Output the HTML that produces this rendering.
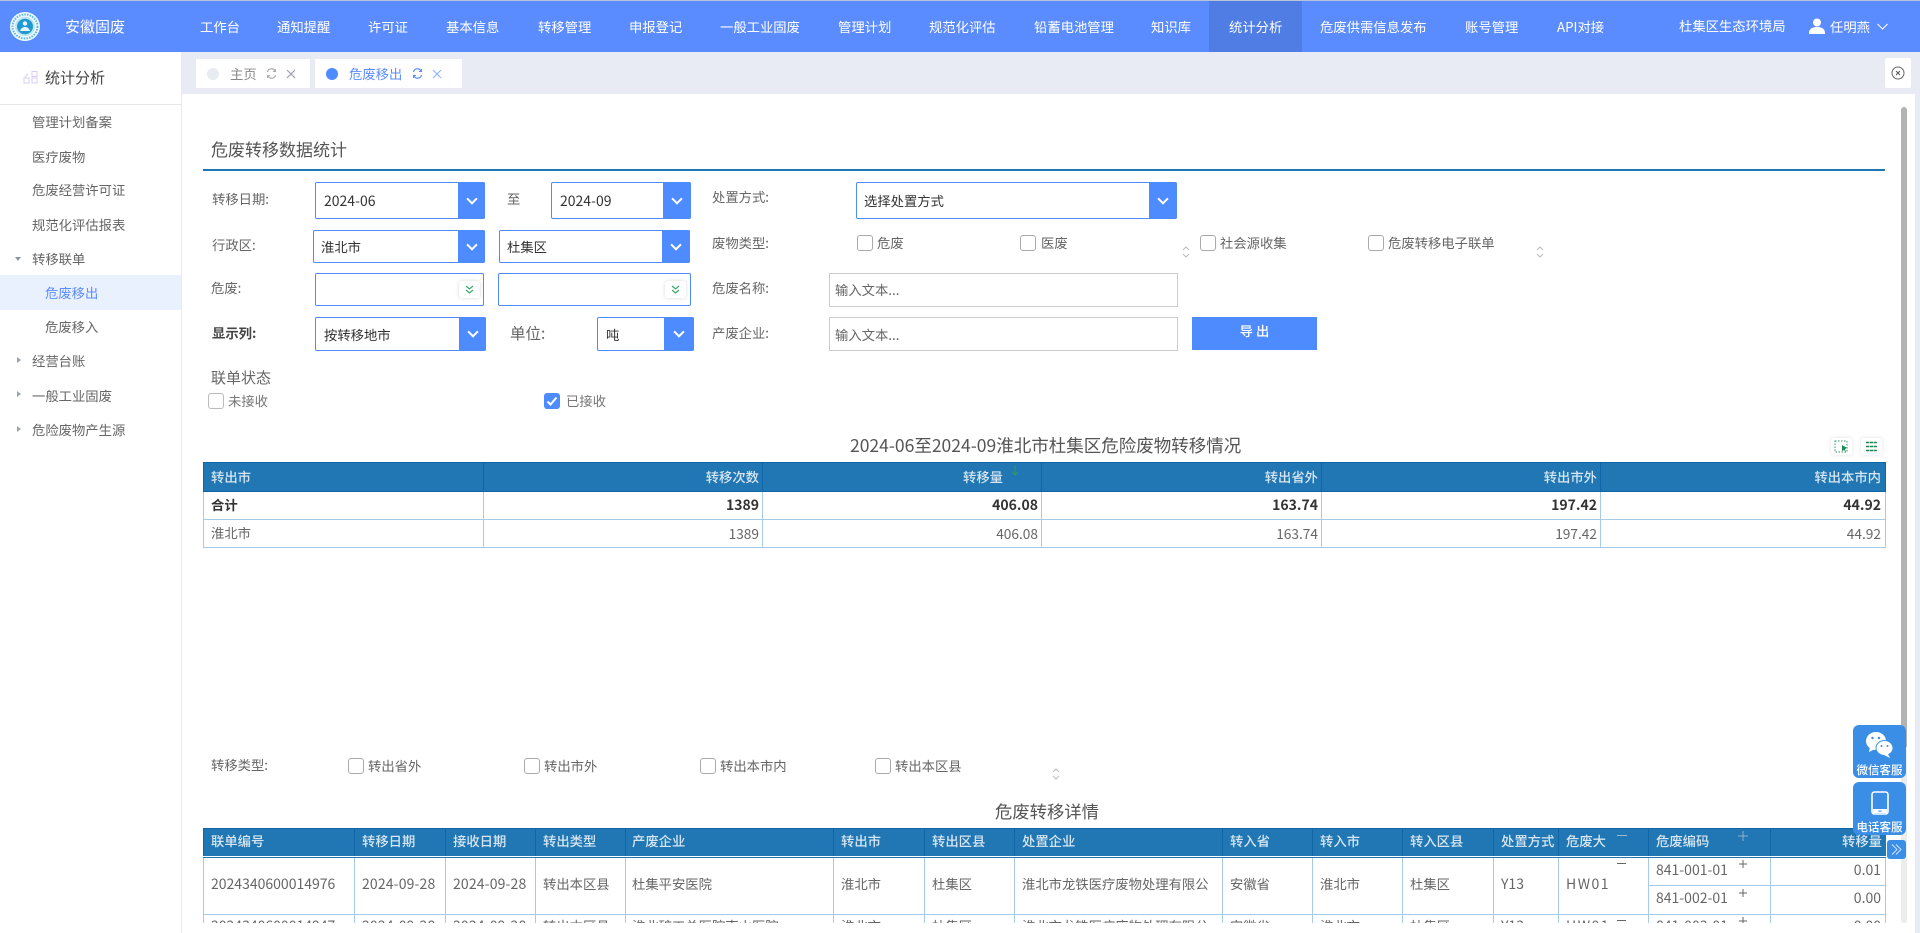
<!DOCTYPE html>
<html lang="zh-CN">
<head>
<meta charset="utf-8">
<title>危废移出</title>
<style>
html,body{margin:0;padding:0;width:1920px;height:933px;overflow:hidden;background:#fff}
body{position:relative;font-family:"Noto Sans CJK SC","Liberation Sans",sans-serif;font-size:13.33px;color:#666}
.a{position:absolute}
.t{position:absolute;white-space:nowrap;line-height:20px;height:20px}
.n{color:#fff}
.sel{position:absolute;box-sizing:border-box;border:1px solid #4d8bff;border-radius:2px;background:#fff}
.sel b{position:absolute;top:-1px;bottom:-1px;right:-1px;background:#4d8bff;border-radius:0 2px 2px 0}
.sel b:after{content:"";position:absolute;left:50%;top:50%;width:6px;height:6px;margin:-6px 0 0 -4px;border-right:2px solid #fff;border-bottom:2px solid #fff;transform:rotate(45deg)}
.v{color:#333}
.d{font-size:14px}
.dt{font-size:14px;letter-spacing:.15px}
.cb{position:absolute;box-sizing:border-box;width:16px;height:16px;border:1px solid #aaa;border-radius:3px;background:#fff}
.inp{position:absolute;box-sizing:border-box;border:1px solid #ccc;background:#fff}
.mini{position:absolute;width:21px;height:17px;background:#fff;border-radius:3px;box-shadow:0 0 4px rgba(0,0,0,.15)}
.h{position:absolute;background:#2077b4}
.hl{position:absolute;background:#0f65a5}
.bl{position:absolute;background:#a6cbe6}
.ht{position:absolute;white-space:nowrap;line-height:20px;height:20px;color:#d7e6f2;font-weight:500}
.r{text-align:right}
.s{font-weight:700;color:#333;font-size:14px}
.g{font-size:13.7px}
</style>
</head>
<body>
<!-- header -->
<div class="a" style="left:0;top:0;width:1920px;height:1px;background:#b9c4d8"></div>
<div class="a" style="left:0;top:1px;width:1920px;height:51px;background:#5b8cff"></div>
<div class="a" style="left:1209px;top:1px;width:93px;height:51px;background:#4f7de4"></div>
<svg class="a" style="left:10px;top:12px" width="30" height="29" viewBox="0 0 30 29"><ellipse cx="15" cy="14.500" rx="15" ry="14.500" fill="#eef9fc"/><ellipse cx="15" cy="14.500" rx="12.500" ry="12" fill="none" stroke="#5bb8dc" stroke-width="2" stroke-dasharray="1.500 1.200"/><ellipse cx="15" cy="14.500" rx="10" ry="9.700" fill="#bfe5f3"/><ellipse cx="15" cy="14.500" rx="8" ry="7.700" fill="#2098d2"/><circle cx="15" cy="11.500" r="2.200" fill="#e6f5fb"/><path d="M10 19c1-3 3-4 5-4s4 1 5 4z" fill="#e6f5fb"/></svg>
<div class="t n" style="left:65px;top:17px;font-size:15px">安徽固废</div>
<div class="t n" style="left:200px;top:17px">工作台</div>
<div class="t n" style="left:277px;top:17px">通知提醒</div>
<div class="t n" style="left:368px;top:17px">许可证</div>
<div class="t n" style="left:446px;top:17px">基本信息</div>
<div class="t n" style="left:538px;top:17px">转移管理</div>
<div class="t n" style="left:629px;top:17px">申报登记</div>
<div class="t n" style="left:720px;top:17px">一般工业固废</div>
<div class="t n" style="left:838px;top:17px">管理计划</div>
<div class="t n" style="left:929px;top:17px">规范化评估</div>
<div class="t n" style="left:1034px;top:17px">铅蓄电池管理</div>
<div class="t n" style="left:1151px;top:17px">知识库</div>
<div class="t n" style="left:1229px;top:17px">统计分析</div>
<div class="t n" style="left:1320px;top:17px">危废供需信息发布</div>
<div class="t n" style="left:1465px;top:17px">账号管理</div>
<div class="t n" style="left:1557px;top:17px">API对接</div>
<div class="t n" style="left:1679px;top:16px">杜集区生态环境局</div>
<svg class="a" style="left:1809px;top:18px" width="16" height="16" viewBox="0 0 16 16"><circle cx="8" cy="4.500" r="4" fill="#fff"/><path d="M0 15c0-4 3-6 8-6s8 2 8 6v1H0z" fill="#fff"/></svg>
<div class="t n" style="left:1830px;top:17px">任明燕</div>
<svg class="a" style="left:1877px;top:23px" width="11" height="7" viewBox="0 0 11 7"><path d="M.5 1l5 5 5-5" fill="none" stroke="#fff" stroke-width="1"/></svg>

<!-- tab bar -->
<div class="a" style="left:182px;top:52px;width:1738px;height:42px;background:#e8ebf3"></div>
<div class="a" style="left:1915px;top:94px;width:5px;height:839px;background:#e8ebf3"></div>
<div class="a" style="left:196px;top:59px;width:114px;height:29px;background:#fff"></div>
<div class="a" style="left:207px;top:68px;width:12px;height:12px;border-radius:50%;background:#e8ebf0"></div>
<div class="t" style="left:230px;top:64px;color:#888">主页</div>
<svg class="a" style="left:266px;top:68px" width="11" height="11" viewBox="0 0 11 11"><path d="M1.500 4A4 4 0 0 1 9 3M9.500 7A4 4 0 0 1 2 8" fill="none" stroke="#aab" stroke-width="1.200"/><path d="M9.500 1v2.500H7M1.500 10V7.500H4" fill="none" stroke="#aab"/></svg>
<svg class="a" style="left:286px;top:69px" width="10" height="10" viewBox="0 0 10 10"><path d="M1 1l8 8M9 1l-8 8" stroke="#99a" stroke-width="1.100"/></svg>
<div class="a" style="left:315px;top:59px;width:147px;height:29px;background:#fff"></div>
<div class="a" style="left:326px;top:68px;width:12px;height:12px;border-radius:50%;background:#4d8bff"></div>
<div class="t" style="left:349px;top:64px;color:#5b8cff">危废移出</div>
<svg class="a" style="left:412px;top:68px" width="11" height="11" viewBox="0 0 11 11"><path d="M1.500 4A4 4 0 0 1 9 3M9.500 7A4 4 0 0 1 2 8" fill="none" stroke="#5b8cff" stroke-width="1.200"/><path d="M9.500 1v2.500H7M1.500 10V7.500H4" fill="none" stroke="#5b8cff"/></svg>
<svg class="a" style="left:432px;top:69px" width="10" height="10" viewBox="0 0 10 10"><path d="M1 1l8 8M9 1l-8 8" stroke="#8fb0ff" stroke-width="1.100"/></svg>
<div class="a" style="left:1885px;top:58px;width:26px;height:30px;background:#fff;border-radius:2px"></div>
<svg class="a" style="left:1891px;top:66px" width="14" height="14" viewBox="0 0 14 14"><circle cx="7" cy="7" r="6" fill="none" stroke="#666"/><path d="M5 5l4 4M9 5l-4 4" stroke="#555"/></svg>

<!-- sidebar -->
<div class="a" style="left:0;top:52px;width:181px;height:881px;background:#fff;border-right:1px solid #eaeaea"></div>
<div class="a" style="left:0;top:104px;width:181px;height:1px;background:#e8e8e8"></div>
<svg class="a" style="left:23px;top:71px" width="15" height="13" viewBox="0 0 15 13"><path d="M9 .5h5v5H9zM1 7h5v5H1zM9 7h5v5H9zM2 6l3-3" fill="none" stroke="#d8ccf5" stroke-width="1"/></svg>
<div class="t" style="left:45px;top:68px;font-size:15px;color:#444">统计分析</div>
<div class="t" style="left:32px;top:112px">管理计划备案</div>
<div class="t" style="left:32px;top:147px">医疗废物</div>
<div class="t" style="left:32px;top:180px">危废经营许可证</div>
<div class="t" style="left:32px;top:215px">规范化评估报表</div>
<div class="a" style="left:15px;top:257px;border-left:3.500px solid transparent;border-right:3.500px solid transparent;border-top:4px solid #8a97a8"></div>
<div class="t" style="left:32px;top:249px">转移联单</div>
<div class="a" style="left:0;top:275px;width:181px;height:35px;background:#e9f0fe"></div>
<div class="t" style="left:45px;top:283px;color:#5b8cff">危废移出</div>
<div class="t" style="left:45px;top:317px">危废移入</div>
<div class="a" style="left:17px;top:357px;border-top:3.500px solid transparent;border-bottom:3.500px solid transparent;border-left:4px solid #9aa5b2"></div>
<div class="t" style="left:32px;top:351px">经营台账</div>
<div class="a" style="left:17px;top:391px;border-top:3.500px solid transparent;border-bottom:3.500px solid transparent;border-left:4px solid #9aa5b2"></div>
<div class="t" style="left:32px;top:386px">一般工业固废</div>
<div class="a" style="left:17px;top:426px;border-top:3.500px solid transparent;border-bottom:3.500px solid transparent;border-left:4px solid #9aa5b2"></div>
<div class="t" style="left:32px;top:420px">危险废物产生源</div>

<!-- title -->
<div class="t" style="left:211px;top:139px;font-size:17px;color:#555">危废转移数据统计</div>
<div class="a" style="left:203px;top:169px;width:1682px;height:2px;background:#1f77b4"></div>

<!-- form row 1 -->
<div class="t" style="left:212px;top:189px">转移日期:</div>
<div class="sel" style="left:315px;top:182px;width:170px;height:37px"><b style="width:27px"></b></div>
<div class="t v d" style="left:324px;top:191px">2024-06</div>
<div class="t" style="left:507px;top:189px">至</div>
<div class="sel" style="left:551px;top:182px;width:140px;height:37px"><b style="width:28px"></b></div>
<div class="t v d" style="left:560px;top:191px">2024-09</div>
<div class="t" style="left:712px;top:187px">处置方式:</div>
<div class="sel" style="left:856px;top:182px;width:321px;height:37px"><b style="width:28px"></b></div>
<div class="t v" style="left:864px;top:191px">选择处置方式</div>

<!-- form row 2 -->
<div class="t" style="left:212px;top:235px">行政区:</div>
<div class="sel" style="left:313px;top:230px;width:172px;height:33px"><b style="width:27px"></b></div>
<div class="t v" style="left:321px;top:237px">淮北市</div>
<div class="sel" style="left:499px;top:230px;width:191px;height:33px"><b style="width:28px"></b></div>
<div class="t v" style="left:507px;top:237px">杜集区</div>
<div class="t" style="left:712px;top:233px">废物类型:</div>
<div class="cb" style="left:857px;top:235px"></div><div class="t" style="left:877px;top:233px">危废</div>
<div class="cb" style="left:1020px;top:235px"></div><div class="t" style="left:1041px;top:233px">医废</div>
<svg class="a" style="left:1181px;top:246px" width="10" height="12" viewBox="0 0 10 12"><path d="M2 4l3-3 3 3M2 8l3 3 3-3" fill="none" stroke="#bbb"/></svg>
<div class="cb" style="left:1200px;top:235px"></div><div class="t" style="left:1220px;top:233px">社会源收集</div>
<div class="cb" style="left:1368px;top:235px"></div><div class="t" style="left:1388px;top:233px">危废转移电子联单</div>
<svg class="a" style="left:1535px;top:246px" width="10" height="12" viewBox="0 0 10 12"><path d="M2 4l3-3 3 3M2 8l3 3 3-3" fill="none" stroke="#bbb"/></svg>

<!-- form row 3 -->
<div class="t" style="left:211px;top:278px">危废:</div>
<div class="sel" style="left:315px;top:273px;width:169px;height:33px"></div>
<div class="mini" style="left:459px;top:281px"></div>
<svg class="a" style="left:465px;top:285px" width="9" height="10" viewBox="0 0 9 10"><path d="M1 1l3.500 3 3.500-3M1 5l3.500 3 3.500-3" fill="none" stroke="#3aa76d" stroke-width="1.200"/></svg>
<div class="sel" style="left:498px;top:273px;width:193px;height:33px"></div>
<div class="mini" style="left:665px;top:281px"></div>
<svg class="a" style="left:671px;top:285px" width="9" height="10" viewBox="0 0 9 10"><path d="M1 1l3.500 3 3.500-3M1 5l3.500 3 3.500-3" fill="none" stroke="#3aa76d" stroke-width="1.200"/></svg>
<div class="t" style="left:712px;top:278px">危废名称:</div>
<div class="inp" style="left:829px;top:273px;width:349px;height:34px"></div>
<div class="t" style="left:835px;top:280px">输入文本...</div>

<!-- form row 4 -->
<div class="t" style="left:212px;top:323px;font-weight:700;color:#444">显示列:</div>
<div class="sel" style="left:315px;top:317px;width:171px;height:34px"><b style="width:27px"></b></div>
<div class="t v" style="left:324px;top:325px">按转移地市</div>
<div class="t" style="left:510px;top:323px;font-size:15.500px">单位:</div>
<div class="sel" style="left:597px;top:317px;width:97px;height:34px"><b style="width:30px"></b></div>
<div class="t v" style="left:606px;top:325px">吨</div>
<div class="t" style="left:712px;top:323px">产废企业:</div>
<div class="inp" style="left:829px;top:317px;width:349px;height:34px"></div>
<div class="t" style="left:835px;top:325px">输入文本...</div>
<div class="a" style="left:1192px;top:317px;width:125px;height:33px;background:#4d8bff;color:#fff;text-align:center;line-height:27px;font-weight:500">导 出</div>

<!-- status -->
<div class="t" style="left:211px;top:368px;font-size:15px">联单状态</div>
<div class="cb" style="left:208px;top:393px;border-color:#bbb"></div>
<div class="t" style="left:228px;top:391px;color:#777">未接收</div>
<div class="a" style="left:544px;top:393px;width:16px;height:16px;border-radius:3px;background:#4d8bff"></div>
<svg class="a" style="left:544px;top:393px" width="16" height="16" viewBox="0 0 16 16"><path d="M3.500 8.500l3 3 6-7" fill="none" stroke="#fff" stroke-width="2"/></svg>
<div class="t" style="left:566px;top:391px;color:#777">已接收</div>

<!-- chart title -->
<div class="t" style="left:850px;top:436px;font-size:17.500px;color:#555">2024-06至2024-09淮北市杜集区危险废物转移情况</div>
<div class="a" style="left:1831px;top:438px;width:21px;height:17px;background:#fff;border-radius:3px;box-shadow:0 0 4px rgba(0,0,0,.12)"></div>
<svg class="a" style="left:1834px;top:440px" width="15" height="13" viewBox="0 0 15 13"><rect x="1" y="1" width="12" height="11" fill="none" stroke="#2e9a62" stroke-dasharray="1.500 1.500"/><path d="M8 5l5 3-2 1 1 3-2-2-2 1z" fill="#1d8a54"/></svg>
<div class="a" style="left:1861px;top:438px;width:21px;height:17px;background:#fff;border-radius:3px;box-shadow:0 0 4px rgba(0,0,0,.12)"></div>
<svg class="a" style="left:1865px;top:441px" width="13" height="11" viewBox="0 0 13 11"><path d="M1 1.500h11M1 5.500h11M1 9.500h11" stroke="#1d8a54" stroke-width="1.500" stroke-dasharray="3.300 .5"/></svg>

<!-- table 1 -->
<div class="h" style="left:203px;top:462px;width:1683px;height:30px"></div>
<div class="hl" style="left:203px;top:462px;width:1683px;height:1px"></div>
<div class="hl" style="left:203px;top:491px;width:1683px;height:1px"></div>
<div class="hl" style="left:203px;top:462px;width:1px;height:30px"></div>
<div class="hl" style="left:483px;top:462px;width:1px;height:30px"></div>
<div class="hl" style="left:762px;top:462px;width:1px;height:30px"></div>
<div class="hl" style="left:1041px;top:462px;width:1px;height:30px"></div>
<div class="hl" style="left:1321px;top:462px;width:1px;height:30px"></div>
<div class="hl" style="left:1600px;top:462px;width:1px;height:30px"></div>
<div class="hl" style="left:1885px;top:462px;width:1px;height:30px"></div>
<div class="bl" style="left:203px;top:492px;width:1px;height:56px"></div>
<div class="bl" style="left:483px;top:492px;width:1px;height:56px"></div>
<div class="bl" style="left:762px;top:492px;width:1px;height:56px"></div>
<div class="bl" style="left:1041px;top:492px;width:1px;height:56px"></div>
<div class="bl" style="left:1321px;top:492px;width:1px;height:56px"></div>
<div class="bl" style="left:1600px;top:492px;width:1px;height:56px"></div>
<div class="bl" style="left:1885px;top:492px;width:1px;height:56px"></div>
<div class="bl" style="left:203px;top:519px;width:1683px;height:1px"></div>
<div class="bl" style="left:203px;top:547px;width:1683px;height:1px"></div>
<div class="ht" style="left:211px;top:467px">转出市</div>
<div class="ht r" style="left:600px;width:159px;top:467px">转移次数</div>
<div class="ht r" style="left:845px;width:158px;top:467px">转移量</div>
<svg class="a" style="left:1011px;top:465px" width="8" height="11" viewBox="0 0 8 11"><path d="M4 0v10M1 7l3 3 3-3" fill="none" stroke="#2e9a62"/></svg>
<div class="ht r" style="left:1160px;width:158px;top:467px">转出省外</div>
<div class="ht r" style="left:1440px;width:157px;top:467px">转出市外</div>
<div class="ht r" style="left:1720px;width:161px;top:467px">转出本市内</div>
<div class="t" style="left:211px;top:495px;font-weight:700;color:#333">合计</div>
<div class="t r s" style="left:600px;width:159px;top:495px">1389</div>
<div class="t r s" style="left:880px;width:158px;top:495px">406.08</div>
<div class="t r s" style="left:1160px;width:158px;top:495px">163.74</div>
<div class="t r s" style="left:1440px;width:157px;top:495px">197.42</div>
<div class="t r s" style="left:1720px;width:161px;top:495px">44.92</div>
<div class="t" style="left:211px;top:523px">淮北市</div>
<div class="t r g" style="left:600px;width:159px;top:523px">1389</div>
<div class="t r g" style="left:880px;width:158px;top:523px">406.08</div>
<div class="t r g" style="left:1160px;width:158px;top:523px">163.74</div>
<div class="t r g" style="left:1440px;width:157px;top:523px">197.42</div>
<div class="t r g" style="left:1720px;width:161px;top:523px">44.92</div>

<!-- transfer type -->
<div class="t" style="left:211px;top:755px">转移类型:</div>
<div class="cb" style="left:348px;top:758px"></div><div class="t" style="left:368px;top:756px">转出省外</div>
<div class="cb" style="left:524px;top:758px"></div><div class="t" style="left:544px;top:756px">转出市外</div>
<div class="cb" style="left:700px;top:758px"></div><div class="t" style="left:720px;top:756px">转出本市内</div>
<div class="cb" style="left:875px;top:758px"></div><div class="t" style="left:895px;top:756px">转出本区县</div>
<svg class="a" style="left:1051px;top:768px" width="10" height="12" viewBox="0 0 10 12"><path d="M2 4l3-3 3 3M2 8l3 3 3-3" fill="none" stroke="#bbb"/></svg>
<div class="t" style="left:995px;top:801px;font-size:17.330px;color:#555">危废转移详情</div>

<!-- table 2 -->
<div class="a" style="left:0;top:0;width:1920px;height:923px;overflow:hidden">
<div class="h" style="left:203px;top:828px;width:1683px;height:28px"></div>
<div class="hl" style="left:203px;top:828px;width:1683px;height:1px"></div>
<div class="bl" style="left:203px;top:857px;width:1683px;height:1px;background:#1f77b4"></div>
<div class="hl" style="left:203px;top:828px;width:1px;height:28px"></div>
<div class="hl" style="left:354px;top:828px;width:1px;height:28px"></div>
<div class="hl" style="left:445px;top:828px;width:1px;height:28px"></div>
<div class="hl" style="left:535px;top:828px;width:1px;height:28px"></div>
<div class="hl" style="left:625px;top:828px;width:1px;height:28px"></div>
<div class="hl" style="left:833px;top:828px;width:1px;height:28px"></div>
<div class="hl" style="left:924px;top:828px;width:1px;height:28px"></div>
<div class="hl" style="left:1014px;top:828px;width:1px;height:28px"></div>
<div class="hl" style="left:1222px;top:828px;width:1px;height:28px"></div>
<div class="hl" style="left:1312px;top:828px;width:1px;height:28px"></div>
<div class="hl" style="left:1402px;top:828px;width:1px;height:28px"></div>
<div class="hl" style="left:1493px;top:828px;width:1px;height:28px"></div>
<div class="hl" style="left:1558px;top:828px;width:1px;height:28px"></div>
<div class="hl" style="left:1648px;top:828px;width:1px;height:28px"></div>
<div class="hl" style="left:1770px;top:828px;width:1px;height:28px"></div>
<div class="bl" style="left:203px;top:858px;width:1px;height:69px"></div>
<div class="bl" style="left:354px;top:858px;width:1px;height:69px"></div>
<div class="bl" style="left:445px;top:858px;width:1px;height:69px"></div>
<div class="bl" style="left:535px;top:858px;width:1px;height:69px"></div>
<div class="bl" style="left:625px;top:858px;width:1px;height:69px"></div>
<div class="bl" style="left:833px;top:858px;width:1px;height:69px"></div>
<div class="bl" style="left:924px;top:858px;width:1px;height:69px"></div>
<div class="bl" style="left:1014px;top:858px;width:1px;height:69px"></div>
<div class="bl" style="left:1222px;top:858px;width:1px;height:69px"></div>
<div class="bl" style="left:1312px;top:858px;width:1px;height:69px"></div>
<div class="bl" style="left:1402px;top:858px;width:1px;height:69px"></div>
<div class="bl" style="left:1493px;top:858px;width:1px;height:69px"></div>
<div class="bl" style="left:1558px;top:858px;width:1px;height:69px"></div>
<div class="bl" style="left:1648px;top:858px;width:1px;height:69px"></div>
<div class="bl" style="left:1770px;top:858px;width:1px;height:69px"></div>
<div class="bl" style="left:1885px;top:858px;width:1px;height:69px"></div>
<div class="bl" style="left:203px;top:914px;width:1683px;height:1px"></div>
<div class="bl" style="left:1648px;top:885px;width:238px;height:1px"></div>
<div class="ht" style="left:211px;top:831px">联单编号</div>
<div class="ht" style="left:362px;top:831px">转移日期</div>
<div class="ht" style="left:453px;top:831px">接收日期</div>
<div class="ht" style="left:543px;top:831px">转出类型</div>
<div class="ht" style="left:632px;top:831px">产废企业</div>
<div class="ht" style="left:841px;top:831px">转出市</div>
<div class="ht" style="left:932px;top:831px">转出区县</div>
<div class="ht" style="left:1022px;top:831px">处置企业</div>
<div class="ht" style="left:1230px;top:831px">转入省</div>
<div class="ht" style="left:1320px;top:831px">转入市</div>
<div class="ht" style="left:1410px;top:831px">转入区县</div>
<div class="ht" style="left:1501px;top:831px">处置方式</div>
<div class="ht" style="left:1566px;top:831px">危废大</div>
<div class="ht" style="left:1656px;top:831px">危废编码</div>
<div class="ht r" style="left:1780px;width:102px;top:831px">转移量</div>
<div class="a" style="left:1617px;top:835px;width:10px;height:1px;background:#9ab8cf"></div>
<svg class="a" style="left:1738px;top:831px" width="10" height="10" viewBox="0 0 10 10"><path d="M0 5h10M5 0v10" stroke="#8fb0c8"/></svg>
<div class="t d" style="left:211px;top:874px">2024340600014976</div>
<div class="t dt" style="left:362px;top:874px">2024-09-28</div>
<div class="t dt" style="left:453px;top:874px">2024-09-28</div>
<div class="t" style="left:543px;top:874px">转出本区县</div>
<div class="t" style="left:632px;top:874px">杜集平安医院</div>
<div class="t" style="left:841px;top:874px">淮北市</div>
<div class="t" style="left:932px;top:874px">杜集区</div>
<div class="t" style="left:1022px;top:874px">淮北市龙铁医疗废物处理有限公</div>
<div class="t" style="left:1230px;top:874px">安徽省</div>
<div class="t" style="left:1320px;top:874px">淮北市</div>
<div class="t" style="left:1410px;top:874px">杜集区</div>
<div class="t d" style="left:1501px;top:874px">Y13</div>
<div class="t d" style="left:1566px;top:874px;letter-spacing:1.500px">HW01</div>
<div class="a" style="left:1617px;top:863px;width:9px;height:1px;background:#666"></div>
<div class="t d" style="left:1656px;top:860px">841-001-01</div>
<svg class="a" style="left:1739px;top:860px" width="8" height="8" viewBox="0 0 8 8"><path d="M0 4h8M4 0v8" stroke="#666"/></svg>
<div class="t r d" style="left:1780px;width:101px;top:860px">0.01</div>
<div class="t d" style="left:1656px;top:888px">841-002-01</div>
<svg class="a" style="left:1739px;top:889px" width="8" height="8" viewBox="0 0 8 8"><path d="M0 4h8M4 0v8" stroke="#666"/></svg>
<div class="t r d" style="left:1780px;width:101px;top:888px">0.00</div>
<div class="t d" style="left:211px;top:916px">2024340600014947</div>
<div class="t dt" style="left:362px;top:916px">2024-09-28</div>
<div class="t dt" style="left:453px;top:916px">2024-09-28</div>
<div class="t" style="left:543px;top:916px">转出本区县</div>
<div class="t" style="left:632px;top:916px">淮北矿工总医院南山医院</div>
<div class="t" style="left:841px;top:916px">淮北市</div>
<div class="t" style="left:932px;top:916px">杜集区</div>
<div class="t" style="left:1022px;top:916px">淮北市龙铁医疗废物处理有限公</div>
<div class="t" style="left:1230px;top:916px">安徽省</div>
<div class="t" style="left:1320px;top:916px">淮北市</div>
<div class="t" style="left:1410px;top:916px">杜集区</div>
<div class="t d" style="left:1501px;top:916px">Y13</div>
<div class="t d" style="left:1566px;top:916px;letter-spacing:1.500px">HW01</div>
<div class="a" style="left:1617px;top:920px;width:9px;height:1px;background:#666"></div>
<div class="t d" style="left:1656px;top:916px">841-003-01</div>
<svg class="a" style="left:1739px;top:917px" width="8" height="8" viewBox="0 0 8 8"><path d="M0 4h8M4 0v8" stroke="#666"/></svg>
<div class="t r d" style="left:1780px;width:101px;top:916px">0.00</div>
</div>

<!-- scrollbar -->
<div class="a" style="left:1901px;top:107px;width:6px;height:816px;background:#ececec;border-radius:3px"></div>
<div class="a" style="left:1901px;top:107px;width:6px;height:640px;background:#b3b3b3;border-radius:3px 3px 0 0"></div>

<!-- float -->
<div class="a" style="left:1853px;top:725px;width:53px;height:53px;background:#3a8ee6;border-radius:6px"></div>
<svg class="a" style="left:1865px;top:731px" width="29" height="28" viewBox="0 0 29 28"><ellipse cx="11" cy="10" rx="10" ry="9" fill="#fff"/><path d="M5 16l-1 5 6-3z" fill="#fff"/><ellipse cx="19.500" cy="17" rx="8.500" ry="7.500" fill="#fff" stroke="#3a8ee6"/><path d="M23 23l2 4-6-3z" fill="#fff"/><circle cx="7.500" cy="7" r="1.200" fill="#3a8ee6"/><circle cx="14" cy="7" r="1.200" fill="#3a8ee6"/><circle cx="16.500" cy="15" r="1" fill="#3a8ee6"/><circle cx="22.500" cy="15" r="1" fill="#3a8ee6"/></svg>
<div class="t n" style="left:1853px;width:53px;text-align:center;top:760px;font-size:11.500px;font-weight:500">微信客服</div>
<div class="a" style="left:1853px;top:782px;width:53px;height:53px;background:#3a8ee6;border-radius:6px"></div>
<svg class="a" style="left:1871px;top:791px" width="18" height="24" viewBox="0 0 18 24"><rect x="1" y="1" width="16" height="22" rx="2.500" fill="#3a8ee6" stroke="#fff" stroke-width="1.600"/><path d="M2 18h14v4H2z" fill="#fff"/><rect x="7.500" y="19.500" width="3" height="1.200" fill="#3a8ee6"/></svg>
<div class="t n" style="left:1853px;width:53px;text-align:center;top:817px;font-size:11.500px;font-weight:500">电话客服</div>
<div class="a" style="left:1887px;top:840px;width:19px;height:19px;background:#3a8ee6;border-radius:3px"></div>
<svg class="a" style="left:1891px;top:844px" width="11" height="11" viewBox="0 0 11 11"><path d="M1 .5l5 5-5 5M5 .5l5 5-5 5" fill="none" stroke="#cfe3fa"/></svg>
</body>
</html>
